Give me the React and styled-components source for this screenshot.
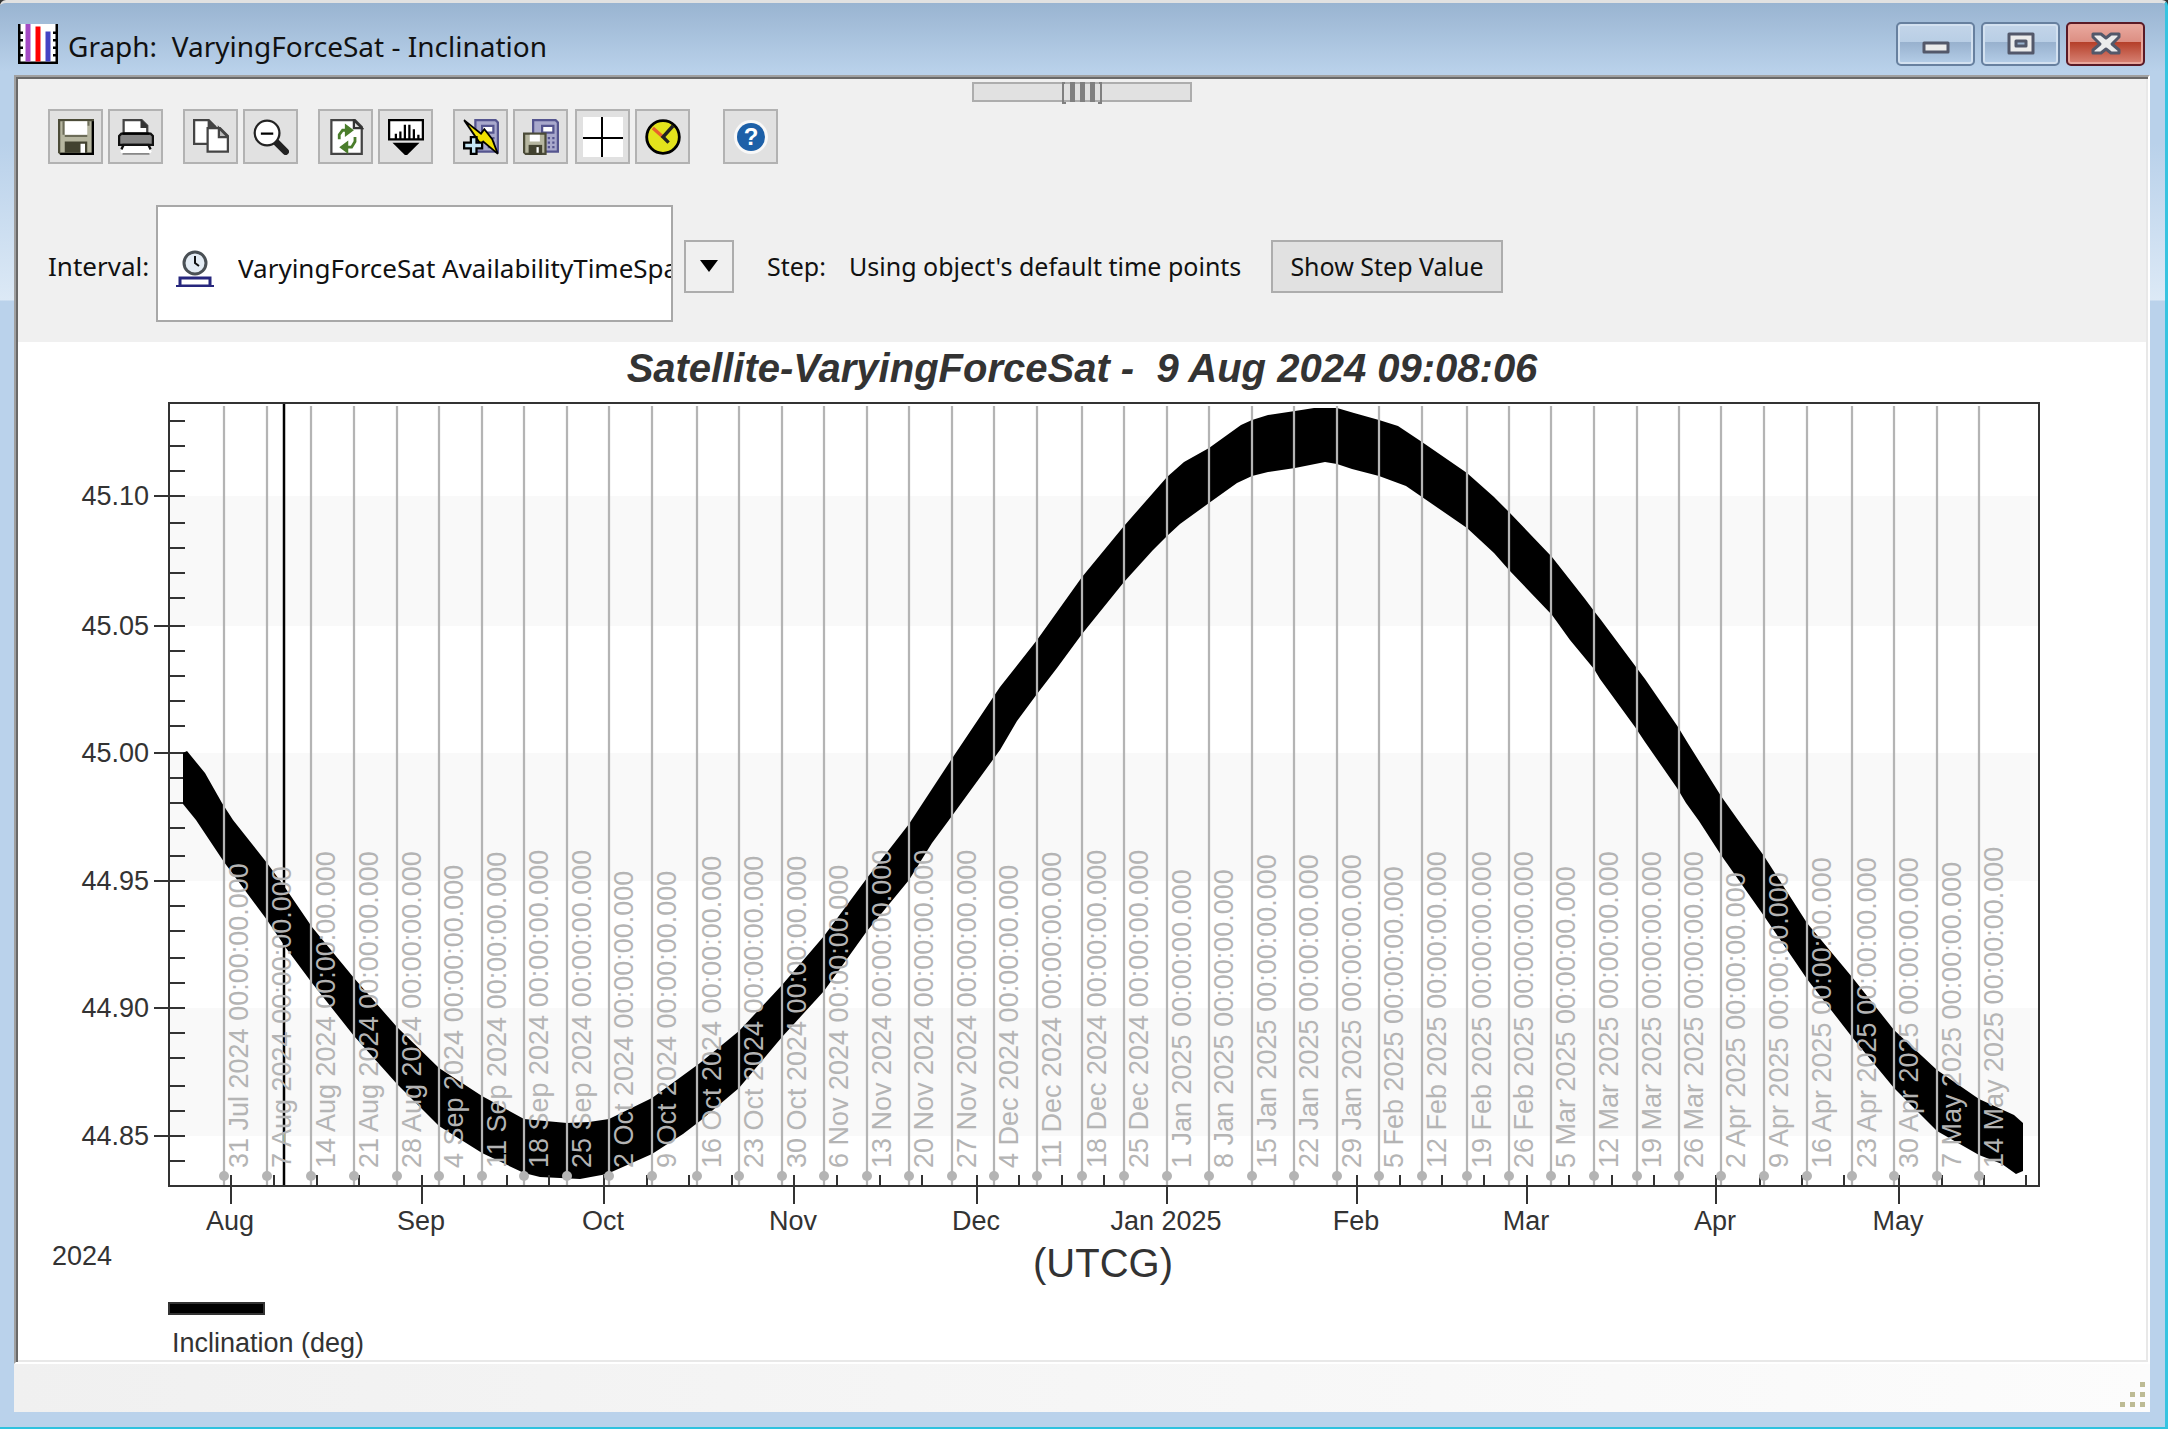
import * as React from "react";
import styled, { createGlobalStyle } from "styled-components";

const uiFont = `"Noto Sans", Tahoma, sans-serif`;
const chartFont = `"Liberation Sans", Arial, sans-serif`;

const MONTHS = [
  { label: "Aug", x: 231 },
  { label: "Sep", x: 422 },
  { label: "Oct", x: 604 },
  { label: "Nov", x: 794 },
  { label: "Dec", x: 977 },
  { label: "Jan 2025", x: 1167 },
  { label: "Feb", x: 1357 },
  { label: "Mar", x: 1527 },
  { label: "Apr", x: 1716 },
  { label: "May", x: 1899 },
];

const WEEK_TICKS = [
  274, 317, 359, 464, 507, 549, 647, 689, 732, 837, 880, 922, 1019, 1062, 1104,
  1400, 1442, 1484, 1569, 1612, 1654, 1760, 1802, 1844, 1942, 1984, 2026,
];

const MARKERS = [
  [224, "31 Jul 2024"],
  [267, "7 Aug 2024"],
  [311, "14 Aug 2024"],
  [354, "21 Aug 2024"],
  [397, "28 Aug 2024"],
  [439, "4 Sep 2024"],
  [482, "11 Sep 2024"],
  [524, "18 Sep 2024"],
  [567, "25 Sep 2024"],
  [609, "2 Oct 2024"],
  [652, "9 Oct 2024"],
  [697, "16 Oct 2024"],
  [739, "23 Oct 2024"],
  [782, "30 Oct 2024"],
  [824, "6 Nov 2024"],
  [867, "13 Nov 2024"],
  [909, "20 Nov 2024"],
  [952, "27 Nov 2024"],
  [994, "4 Dec 2024"],
  [1037, "11 Dec 2024"],
  [1082, "18 Dec 2024"],
  [1124, "25 Dec 2024"],
  [1167, "1 Jan 2025"],
  [1209, "8 Jan 2025"],
  [1252, "15 Jan 2025"],
  [1294, "22 Jan 2025"],
  [1337, "29 Jan 2025"],
  [1379, "5 Feb 2025"],
  [1422, "12 Feb 2025"],
  [1467, "19 Feb 2025"],
  [1509, "26 Feb 2025"],
  [1551, "5 Mar 2025"],
  [1594, "12 Mar 2025"],
  [1637, "19 Mar 2025"],
  [1679, "26 Mar 2025"],
  [1721, "2 Apr 2025"],
  [1764, "9 Apr 2025"],
  [1807, "16 Apr 2025"],
  [1852, "23 Apr 2025"],
  [1894, "30 Apr 2025"],
  [1937, "7 May 2025"],
  [1979, "14 May 2025"],
];

const VALUES = [
  { label: "45.10", y: 496 },
  { label: "45.05", y: 626 },
  { label: "45.00", y: 753 },
  { label: "44.95", y: 881 },
  { label: "44.90", y: 1008 },
  { label: "44.85", y: 1136 },
];

const VALUE_TICKS = [
  421, 446, 471, 523, 548, 573, 598, 651, 676, 701, 726, 778, 803, 828, 856,
  906, 931, 958, 983, 1033, 1058, 1086, 1111, 1161,
];

const BANDS = [
  [496, 626],
  [753, 881],
  [1008, 1136],
];

// upper and lower envelope of the inclination oscillation
const UPPER =
  "183,753 187,751 205,773 222,803 233,820 267,863 284,886 312,927 354,978 397,1027 439,1068 482,1096 524,1119 567,1123 589,1122 609,1119 652,1098 700,1063 739,1031 782,985 824,936 867,878 909,824 951,760 1000,687 1037,640 1082,577 1124,526 1167,477 1184,462 1209,448 1241,425 1252,420 1268,415 1295,411 1314,408 1337,408 1354,413 1379,420 1398,426 1422,442 1467,473 1494,497 1509,512 1552,557 1585,599 1594,611 1601,620 1636,667 1645,679 1678,727 1689,745 1721,796 1738,820 1764,856 1807,923 1852,977 1894,1030 1937,1070 1979,1099 2014,1115 2023,1123";
const LOWER =
  "2023,1171 2016,1174 2002,1164 1979,1155 1937,1131 1894,1088 1852,1037 1807,979 1764,916 1721,855 1699,821 1686,803 1677,788 1645,742 1635,727 1600,679 1594,669 1570,640 1552,615 1509,570 1494,553 1467,528 1422,497 1406,486 1379,476 1352,469 1337,464 1325,462 1295,468 1268,472 1252,476 1237,483 1209,503 1180,524 1167,536 1153,550 1124,582 1082,634 1057,668 1037,694 1017,721 1000,750 949,820 932,843 909,880 867,931 824,991 782,1037 739,1088 700,1121 683,1134 652,1154 607,1174 580,1179 540,1177 524,1173 482,1153 439,1126 397,1084 354,1036 312,983 286,948 267,920 224,862 196,820 183,804";

const App = () => (
  <>
    <GlobalStyle />
    <Window>
      <TitleBar>
        <GraphIcon />
        <WindowTitle>Graph:&nbsp; VaryingForceSat - Inclination</WindowTitle>
        <WindowButton aria-label="Minimize">
          <svg width="28" height="22" viewBox="0 0 28 22">
            <Glyph d="M2 10h24v9H2z" />
          </svg>
        </WindowButton>
        <WindowButton aria-label="Maximize">
          <svg width="28" height="24" viewBox="0 0 28 24">
            <Glyph
              fillRule="evenodd"
              d="M2 2h24v19H2zM9 9v5h10V9z"
            />
          </svg>
        </WindowButton>
        <WindowButton aria-label="Close" $danger>
          <svg width="30" height="24" viewBox="0 0 30 24">
            <Glyph d="M2 2h8l5 4 5-4h8v3l-7 7 7 6v3h-8l-5-4-5 4H2v-3l7-6-7-7z" />
          </svg>
        </WindowButton>
      </TitleBar>

      <Client>
        <Controls>
          <Handle aria-label="Collapse toolbar">
            <svg width="42" height="22" viewBox="0 0 42 22">
              <path
                d="M4 1H2v20h3M38 1h2v20h-3"
                fill="none"
                stroke="#808080"
                strokeWidth="2"
              />
              <path d="M9 0h5v20H9zM19 0h5v20h-5zM29 0h5v20h-5z" fill="#808080" />
            </svg>
          </Handle>
          <Toolbar>
            <ToolGroup>
              <ToolButton aria-label="Save">
                <SaveIcon />
              </ToolButton>
              <ToolButton aria-label="Print">
                <PrintIcon />
              </ToolButton>
            </ToolGroup>
            <ToolGroup>
              <ToolButton aria-label="Copy">
                <CopyIcon />
              </ToolButton>
              <ToolButton aria-label="Zoom out">
                <ZoomOutIcon />
              </ToolButton>
            </ToolGroup>
            <ToolGroup>
              <ToolButton aria-label="Refresh">
                <RefreshIcon />
              </ToolButton>
              <ToolButton aria-label="Export data">
                <ExportIcon />
              </ToolButton>
            </ToolGroup>
            <ToolGroup>
              <ToolButton aria-label="Quick report">
                <QuickReportIcon />
              </ToolButton>
              <ToolButton aria-label="Save report">
                <SaveReportIcon />
              </ToolButton>
              <ToolDivider />
              <ToolButton aria-label="Crosshair">
                <svg width="40" height="40" viewBox="0 0 40 40">
                  <path d="M0 0h40v40H0z" fill="#fff" />
                  <path d="M19 0v40M0 21h40" stroke="#000" strokeWidth="2" />
                </svg>
              </ToolButton>
              <ToolButton aria-label="Time">
                <TimeIcon />
              </ToolButton>
            </ToolGroup>
            <HelpButton aria-label="Help">
              <HelpIcon />
            </HelpButton>
          </Toolbar>
          <Options>
            <Label htmlFor="interval">Interval:</Label>
            <IntervalBox>
              <IntervalIcon />
              <IntervalInput
                id="interval"
                defaultValue="VaryingForceSat AvailabilityTimeSpan"
              />
            </IntervalBox>
            <DropButton aria-label="Choose interval">
              <svg width="18" height="12" viewBox="0 0 18 12">
                <path d="M0 0h18l-9 12z" />
              </svg>
            </DropButton>
            <StepLabel>Step:</StepLabel>
            <StepValue>Using object's default time points</StepValue>
            <StepButton>Show Step Value</StepButton>
          </Options>
        </Controls>

        <Report>
          <ReportTitle>
            Satellite-VaryingForceSat -&nbsp; 9 Aug 2024 09:08:06
          </ReportTitle>
          <Chart />
          <Legend>
            <Swatch />
            Inclination (deg)
          </Legend>
        </Report>
      </Client>

      <StatusBar>
        <svg width="26" height="26" viewBox="0 0 26 26" fill="#bdbb94">
          <path d="M20 0h5v5h-5zM10 10h5v5h-5zM20 10h5v5h-5zM0 20h5v5H0zM10 20h5v5h-5zM20 20h5v5h-5z" />
        </svg>
      </StatusBar>
    </Window>
  </>
);

const Chart = () => (
  <Plot viewBox="18 394 2128 896" role="img" aria-label="Inclination over time">
    {BANDS.map(([top, bottom]) => (
      <rect
        key={top}
        x="169"
        y={top}
        width="1870"
        height={bottom - top}
        fill="#f9f9f9"
      />
    ))}

    <g stroke="#333" strokeWidth="2">
      {VALUES.map(({ y }) => (
        <path key={y} d={`M154 ${y}H185`} />
      ))}
      {VALUE_TICKS.map((y) => (
        <path key={y} d={`M169 ${y}H185`} />
      ))}
    </g>

    <polygon points={`${UPPER} ${LOWER}`} fill="#000" />

    <g stroke="#333" strokeWidth="2">
      {MONTHS.map(({ x }) => (
        <path key={x} d={`M${x} 1175V1204`} />
      ))}
      {WEEK_TICKS.map((x) => (
        <path key={x} d={`M${x} 1175V1186`} />
      ))}
    </g>
    <path d="M284 404V1186" stroke="#000" strokeWidth="2.500" />

    {MARKERS.map(([x, date]) => (
      <g key={x} fill="#b4b4b4">
        <path d={`M${x} 406V1186`} stroke="#b4b4b4" strokeWidth="2.250" />
        <circle cx={x} cy="1176" r="5" />
        <AxisText transform={`translate(${x + 24} 1168) rotate(-90)`} $muted>
          {date} 00:00:00.000
        </AxisText>
      </g>
    ))}

    <rect
      x="169"
      y="403"
      width="1870"
      height="783"
      fill="none"
      stroke="#333"
      strokeWidth="2"
    />

    {VALUES.map(({ label, y }) => (
      <AxisText key={label} x="149" y={y + 9} textAnchor="end">
        {label}
      </AxisText>
    ))}
    {MONTHS.map(({ label, x }) => (
      <AxisText key={label} x={x - 1} y="1230" textAnchor="middle">
        {label}
      </AxisText>
    ))}
    <AxisText x="52" y="1265">
      2024
    </AxisText>
    <AxisTitle x="1103" y="1277" textAnchor="middle">
      (UTCG)
    </AxisTitle>
  </Plot>
);

const GraphIcon = () => (
  <svg width="40" height="40" viewBox="0 0 16 16">
    <path d="M0 0h16v16H0z" fill="#fff" />
    <path
      d="M0 0h1v15h14V0h1v16H0zM1 3h1v1H1zM1 6h1v1H1zM1 9h1v1H1zM1 12h1v1H1zM14 3h1v1h-1zM14 6h1v1h-1zM14 9h1v1h-1zM14 12h1v1h-1z"
      fill="#000"
    />
    <path d="M3 0h2v15H3z" fill="#a349c4" />
    <path d="M7 1h2v14H7z" fill="#f00" />
    <path d="M11 3h2v12h-2z" fill="#4343c4" />
  </svg>
);

const Icon = (props) => (
  <svg width="36" height="36" viewBox="0 0 16 16" {...props} />
);

const SaveIcon = () => (
  <Icon>
    <path d="M0 0h16v16H1L0 15z" fill="#4b4b38" />
    <path d="M1 1h14v14H1z" fill="#b6b6a0" />
    <path d="M15 1h1v15H1v-1h14z" fill="#000" />
    <path d="M2 1h1v6h10V1h1v2h-1v5H3V7H2z" fill="#6c6c58" />
    <path d="M3 1h10v6H3z" fill="#fff" />
    <path d="M3 10h10v5H3z" fill="#424230" />
    <path d="M10 11h2v4h-2z" fill="#fff" />
  </Icon>
);

const PrintIcon = () => (
  <Icon>
    <path d="M2.500 6.500V.5h8l2.500 2.500v3.500z" fill="#fff" stroke="#444" />
    <path d="M10 0l3 3v1h-3z" fill="#333" />
    <path d="M1.500 6.500h13l1 1v4H.5v-4z" fill="#868686" stroke="#111" />
    <path d="M2 6.500h12" stroke="#000" />
    <path d="M2.500 11.500h11l1.500 3-1 1h-12l-1-1z" fill="#fff" />
    <path d="M2 11.500h12M2.500 11.500l-1 2M13.500 11.500l1 2" stroke="#111" />
    <path d="M2 15.500h12" stroke="#888" strokeWidth=".8" />
  </Icon>
);

const CopyIcon = () => (
  <Icon fill="#fff" stroke="#444">
    <path d="M.5.5h6.500l3 3v7.500H.5z" />
    <path d="M7 .5v3h3" fill="#444" />
    <path d="M6.500 4h5.500l3.500 3.500v7h-9z" />
    <path d="M11.500 4v4h4z" fill="#bbb" />
  </Icon>
);

const ZoomOutIcon = () => (
  <Icon>
    <path d="M10 10l4.500 4.500" stroke="#222" strokeWidth="3" strokeLinecap="round" />
    <circle cx="6.250" cy="6.250" r="5.500" fill="#fff" stroke="#222" />
    <path d="M3.500 6.500h5.500" stroke="#000" />
  </Icon>
);

const RefreshIcon = () => (
  <Icon>
    <path d="M1.500.5h10.500l3 3v12H1.500z" fill="#fff" stroke="#444" />
    <path d="M11.500.5v3.500h3.500z" fill="#ddd" stroke="#333" />
    <g fill="none" stroke="#4a7d2b" strokeWidth="1.250">
      <path d="M5 9V7l1.500-2H9M12 8v2l-1.500 2.500H8" />
    </g>
    <path d="M7.500 2l4 3-4 3zM9 9.500l-4 3 4 3z" fill="#4a7d2b" />
  </Icon>
);

const ExportIcon = () => (
  <Icon>
    <path d="M.5.5h15v8.500H.5z" fill="#fff" stroke="#000" />
    <path
      d="M3.500 6.500V9M5.500 5.500V9M7.500 2.500V9M9.500 2.500V9M11.500 4.500V9M13.500 7V9"
      stroke="#000"
    />
    <path d="M2 10.500h12L8 16.500z" fill="#000" />
  </Icon>
);

const Sheet = ({ x }) => (
  <>
    <path d={`M${x} .5H14.500l1 1V14.500H${x}z`} fill="#a9a9cc" stroke="#55558f" />
    <path d="M8.500 3h5v3h-5z" fill="#fff" stroke="#55558f" />
    <path
      d="M11 8.500h1M13 8.500h1M11 10.500h1M13 10.500h1M11 12.500h1M13 12.500h1"
      stroke="#55558f"
    />
  </>
);

const QuickReportIcon = () => (
  <Icon>
    <Sheet x="5.500" />
    <path
      d="M.5.5l7.500 6 1.500-2L13 9l2.500 6.500-6.500-5.500-1 1.500z"
      fill="#f0e000"
      stroke="#000"
      strokeWidth=".8"
    />
    <path
      d="M3.500 8h2.500v2.500H8.500v2.500H6v2.500H3.500v-2.500H.5v-2.500h3z"
      fill="#c5e6f5"
      stroke="#000"
    />
  </Icon>
);

const SaveReportIcon = () => (
  <Icon>
    <Sheet x="4.500" />
    <path d="M0 6h10.500v10H1l-1-1z" fill="#4b4b38" />
    <path d="M1 7h8.500v8H1z" fill="#b6b6a0" />
    <path d="M3 7h4.500v3H3z" fill="#fff" />
    <path d="M2.500 11.500h6V16h-6z" fill="#424230" />
    <path d="M6 12.500h1V15H6z" fill="#fff" />
  </Icon>
);

const TimeIcon = () => (
  <Icon>
    <circle cx="8" cy="8" r="7.250" fill="#e3e31c" stroke="#000" strokeWidth="1.250" />
    <path d="M3.500 4L8 8" stroke="#e8622c" strokeWidth="1.500" />
    <path d="M12.500 3L8 8l2.500 2.500" fill="none" stroke="#222" strokeWidth="1.500" />
  </Icon>
);

const HelpIcon = () => (
  <svg width="36" height="36" viewBox="0 0 36 36">
    <circle cx="18" cy="18" r="17" fill="#f8f8f8" />
    <circle cx="18" cy="18" r="14" fill="#1d60a8" />
    <HelpMark x="18" y="26" textAnchor="middle">
      ?
    </HelpMark>
  </svg>
);

const IntervalIcon = () => (
  <svg width="38" height="38" viewBox="0 0 38 38">
    <circle cx="19" cy="14" r="11" fill="#e4ecf4" stroke="#4a5055" strokeWidth="3" />
    <path d="M19 7v7l4 3" fill="none" stroke="#111" strokeWidth="2" />
    <path d="M4 29h30v8H4z" fill="#fff" stroke="#26267d" strokeWidth="3" />
    <path d="M0 37h38" stroke="#26267d" strokeWidth="2" />
  </svg>
);

const GlobalStyle = createGlobalStyle`
  * {
    box-sizing: border-box;
  }

  body {
    margin: 0;
    background: #333;
    font-family: ${uiFont};
    font-size: 25px;
    color: #111;
  }

  button,
  input {
    font: inherit;
    color: inherit;
  }

  svg {
    display: block;
    flex-shrink: 0;
  }
`;

const Window = styled.main`
  display: flex;
  flex-direction: column;
  min-height: 100vh;
  padding: 0 15px 15px 14px;
  border-top: 3px solid #e1e1e1;
  border-right: 3px solid #36c3e0;
  border-bottom: 2px solid #2fc2de;
  border-radius: 6px 6px 0 0;
  background: linear-gradient(
    #99b4d1 0,
    #b9d1ea 68px,
    #b9d1ea 140px,
    #dce9f6 297px,
    #bad2eb 298px
  );
`;

const TitleBar = styled.header`
  display: flex;
  align-items: center;
  gap: 6px;
  height: 72px;
  padding: 10px 5px 0 4px;
`;

const WindowTitle = styled.h1`
  flex: 1;
  margin: 0;
  padding: 4px 0 0 4px;
  font-size: 28px;
  font-weight: 400;
  line-height: 34px;
`;

const WindowButton = styled.button`
  display: flex;
  align-items: center;
  justify-content: center;
  width: 79px;
  height: 44px;
  padding: 0;
  border: 2px solid ${(props) => (props.$danger ? "#5a1a26" : "#67809f")};
  border-radius: 5px;
  box-shadow: inset 0 0 0 2px
    ${(props) => (props.$danger ? "#e9a79c" : "#d3e1f0")};
  background: ${(props) =>
    props.$danger
      ? "linear-gradient(#eaaaa0, #dc8f83 44%, #b5402a 46%, #d98577)"
      : "linear-gradient(#c3d5e9, #b9cee5 44%, #98b1ce 46%, #b5cee8)"};
`;

const Glyph = styled.path`
  fill: #ececec;
  stroke: #53586a;
  stroke-width: 3;
  stroke-linejoin: round;
`;

const Client = styled.div`
  display: flex;
  flex: 1;
  flex-direction: column;
  padding: 2px;
  border: 2px solid;
  border-color: #a0a0a0 #fff #fff #a0a0a0;
  box-shadow: inset 2px 2px #696969, inset -2px -2px #e8e8e8;
  background: #fff;
`;

const Controls = styled.section`
  padding: 3px 30px 20px;
  background: #f0f0f0;
`;

const Handle = styled.button`
  display: flex;
  justify-content: center;
  width: 220px;
  height: 20px;
  margin: 0 auto 7px;
  padding: 0;
  border: 2px solid #adadad;
  background: #e1e1e1;

  svg {
    margin-top: -2px;
  }
`;

const Toolbar = styled.div`
  display: flex;
  gap: 20px;
`;

const ToolGroup = styled.div`
  display: flex;
  gap: 5px;
`;

const ToolDivider = styled.span`
  width: 0;
  margin-right: -3px;
`;

const ToolButton = styled.button`
  display: flex;
  align-items: center;
  justify-content: center;
  width: 55px;
  height: 55px;
  padding: 0;
  border: 2px solid #b2b2b2;
  background: #e1e1e1;
`;

const HelpButton = styled(ToolButton)`
  margin-left: 13px;
`;

const HelpMark = styled.text`
  fill: #fff;
  font-family: ${chartFont};
  font-size: 24px;
  font-weight: 700;
`;

const Options = styled.div`
  display: flex;
  align-items: center;
  margin-top: 46px;
  line-height: 34px;
  white-space: nowrap;
`;

const Label = styled.label`
  width: 108px;
  font-size: 26px;
`;

const IntervalBox = styled.div`
  display: flex;
  align-items: center;
  width: 517px;
  height: 117px;
  margin-top: -5px;
  padding: 8px 0 0 18px;
  border: 2px solid #a8a8a8;
  background: #fff;
`;

const IntervalInput = styled.input`
  flex: 1;
  min-width: 0;
  height: 34px;
  margin-left: 24px;
  padding: 0;
  border: 0;
  outline: 0;
  background: none;
  font-size: 26px;
`;

const DropButton = styled.button`
  display: flex;
  align-items: center;
  justify-content: center;
  width: 50px;
  height: 53px;
  margin-left: 11px;
  padding: 0;
  border: 2px solid #adadad;
  background: #f0f0f0;
`;

const StepLabel = styled.span`
  width: 82px;
  margin-left: 33px;
`;

const StepValue = styled.span`
  min-width: 396px;
`;

const StepButton = styled.button`
  width: 232px;
  height: 53px;
  margin-left: 26px;
  padding: 0;
  border: 2px solid #adadad;
  background: #e1e1e1;
`;

const Report = styled.section`
  flex: 1;
  background: #fff;
  color: #333;
  font-family: ${chartFont};
`;

const ReportTitle = styled.h2`
  margin: 0;
  font-size: 40px;
  font-style: italic;
  font-weight: 700;
  line-height: 52px;
  text-align: center;
`;

const Plot = styled.svg`
  width: 100%;
`;

const AxisText = styled.text`
  fill: ${(props) => (props.$muted ? "#b4b4b4" : "#333")};
  font-family: ${chartFont};
  font-size: 27px;
`;

const AxisTitle = styled(AxisText)`
  font-size: 40px;
`;

const Legend = styled.div`
  padding: 12px 154px 0;
  font-size: 27px;
  line-height: 34px;
`;

const Swatch = styled.div`
  width: 97px;
  height: 13px;
  margin: 0 0 11px -4px;
  border: 2px solid #333;
  background: #000;
`;

const StatusBar = styled.footer`
  display: flex;
  align-items: flex-start;
  justify-content: flex-end;
  height: 48px;
  padding: 18px 4px 0 0;
  background: linear-gradient(to right, #f0f0f0, #fcfcfc);
`;

export default App;
